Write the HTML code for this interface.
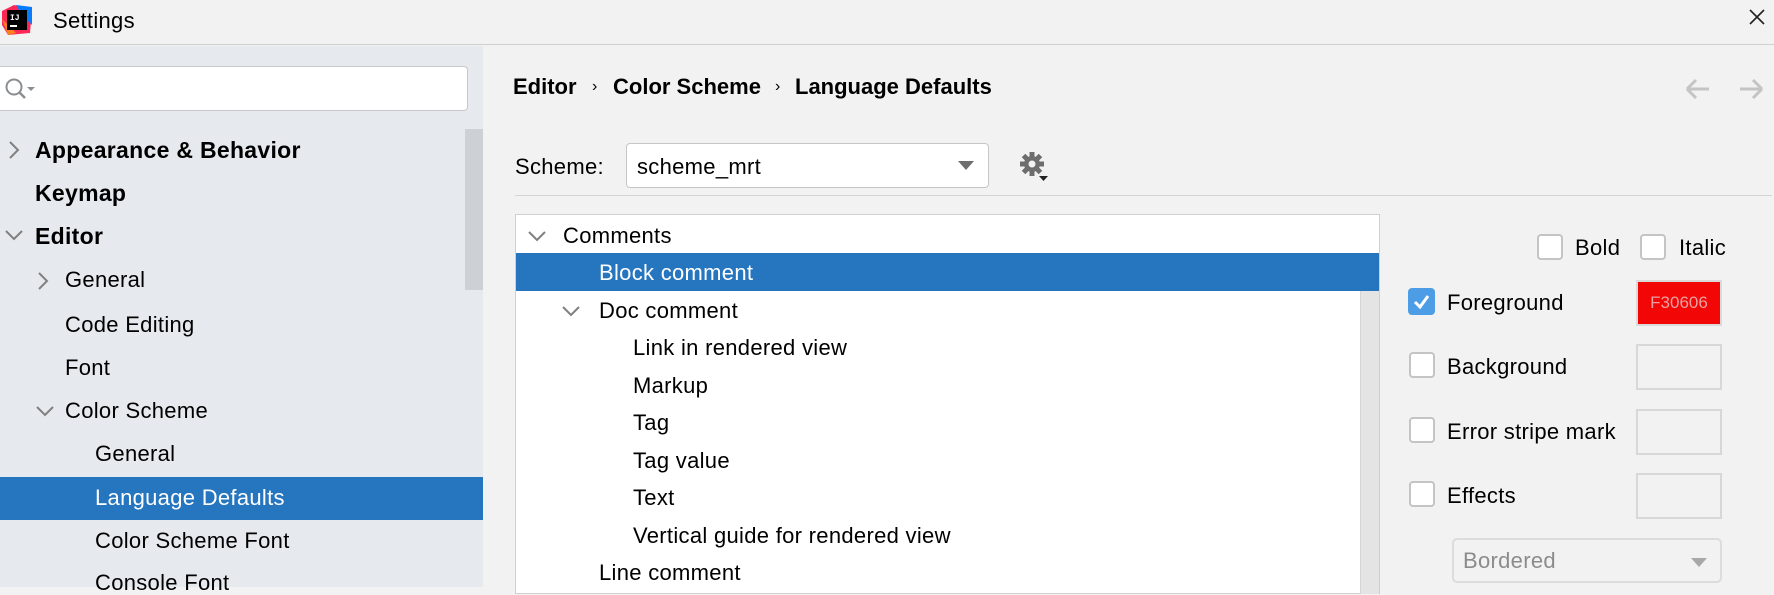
<!DOCTYPE html>
<html><head><style>
*{margin:0;padding:0;box-sizing:border-box}
body{width:1774px;height:587px;overflow:hidden;background:#f2f2f2;font-family:"Liberation Sans","Noto Sans CJK SC",sans-serif;color:#000;position:relative}
.a{position:absolute;white-space:nowrap}
.t{font-size:22px;line-height:24px;letter-spacing:0.3px}
.b{font-weight:bold}
.cb{position:absolute;width:26px;height:26px;border:2px solid #c4c4c4;border-radius:4px;background:#fff}
.box{position:absolute;left:1636px;width:86px;height:46px;border:2px solid #d8d8d8;background:#f2f2f2}
</style></head><body>
<div class="a" style="left:0;top:0;width:1774px;height:45px;background:#f2f2f2;border-bottom:1px solid #d0d0d0"></div>
<svg class="a" style="left:2px;top:5px" width="30" height="30" viewBox="0 0 30 30">
<polygon points="0,6 12,0 30,4 28,28 6,30 0,20" fill="#fe2857"/>
<polygon points="14,0 30,2 30,20 20,10" fill="#087cfa"/>
<polygon points="0,14 6,30 14,28" fill="#fc801d"/>
<rect x="5" y="5" width="20" height="20" fill="#000"/>
<text x="8" y="15" fill="#fff" font-size="8" font-family="Liberation Mono" font-weight="bold">IJ</text>
<rect x="8" y="20" width="7" height="2" fill="#fff"/>
</svg>
<div class="a" style="left:53px;top:8px;font-size:22px;line-height:26px;letter-spacing:0.3px">Settings</div>
<svg class="a" style="left:1749px;top:9px" width="16" height="16"><path d="M1 1L15 15M15 1L1 15" stroke="#222" stroke-width="1.6"/></svg>

<div class="a" style="left:0;top:46px;width:483px;height:541px;background:#e6eaee"></div>
<div class="a" style="left:0;top:66px;width:468px;height:45px;background:#fff;border:1px solid #c8c8c8;border-left:none;border-radius:0 4px 4px 0"></div>
<svg class="a" style="left:4px;top:76px" width="32" height="26"><circle cx="10" cy="11" r="7.5" fill="none" stroke="#8a8e92" stroke-width="2"/><path d="M15 16L21 22" stroke="#8a8e92" stroke-width="2.5"/><path d="M23 11h8l-4 4z" fill="#8a8e92"/></svg>
<div class="a" style="left:465px;top:129px;width:18px;height:161px;background:#cdd0d4"></div>
<svg class="a" style="left:7px;top:140px" width="14" height="20"><path d="M3 2L11 10L3 18" fill="none" stroke="#808080" stroke-width="2"/></svg>
<div class="a t b" style="left:35px;top:138px;font-size:23px">Appearance &amp; Behavior</div>
<div class="a t b" style="left:35px;top:181px;font-size:23px">Keymap</div>
<svg class="a" style="left:4px;top:228px" width="20" height="14"><path d="M2 3L10 11L18 3" fill="none" stroke="#808080" stroke-width="2"/></svg>
<div class="a t b" style="left:35px;top:224px;font-size:23px">Editor</div>
<svg class="a" style="left:36px;top:271px" width="14" height="20"><path d="M3 2L11 10L3 18" fill="none" stroke="#808080" stroke-width="2"/></svg>
<div class="a t" style="left:65px;top:268px">General</div>
<div class="a t" style="left:65px;top:313px">Code Editing</div>
<div class="a t" style="left:65px;top:356px">Font</div>
<svg class="a" style="left:35px;top:404px" width="20" height="14"><path d="M2 3L10 11L18 3" fill="none" stroke="#808080" stroke-width="2"/></svg>
<div class="a t" style="left:65px;top:399px">Color Scheme</div>
<div class="a t" style="left:95px;top:442px">General</div>
<div class="a" style="left:0;top:477px;width:483px;height:43px;background:#2675bf"></div>
<div class="a t" style="left:95px;top:486px;color:#fff">Language Defaults</div>
<div class="a t" style="left:95px;top:529px">Color Scheme Font</div>
<div class="a t" style="left:95px;top:571px">Console Font</div>

<div class="a b" style="left:513px;top:74px;font-size:22px;line-height:26px">Editor</div>
<div class="a" style="left:592px;top:74px;font-size:16px;line-height:26px">›</div>
<div class="a b" style="left:613px;top:74px;font-size:22px;line-height:26px">Color Scheme</div>
<div class="a" style="left:775px;top:74px;font-size:16px;line-height:26px">›</div>
<div class="a b" style="left:795px;top:74px;font-size:22px;line-height:26px">Language Defaults</div>
<svg class="a" style="left:1685px;top:78px" width="80" height="22"><path d="M2 11H24M2 11L11 2M2 11L11 20" fill="none" stroke="#c4c4c4" stroke-width="3"/><path d="M55 11H77M77 11L68 2M77 11L68 20" fill="none" stroke="#c4c4c4" stroke-width="3"/></svg>

<div class="a t" style="left:515px;top:155px">Scheme:</div>
<div class="a" style="left:626px;top:143px;width:363px;height:45px;background:#fff;border:1px solid #c6c6c6;border-radius:4px"></div>
<div class="a t" style="left:637px;top:155px">scheme_mrt</div>
<svg class="a" style="left:958px;top:161px" width="16" height="10"><path d="M0 0H16L8 9z" fill="#6e6e6e"/></svg>
<svg class="a" style="left:1019px;top:151px" width="32" height="32" viewBox="0 0 32 32">
<g fill="#6e6e6e" transform="translate(13,13)">
<circle r="8"/>
<rect x="-2.5" y="-12" width="5" height="24"/>
<rect x="-2.5" y="-12" width="5" height="24" transform="rotate(45)"/>
<rect x="-2.5" y="-12" width="5" height="24" transform="rotate(90)"/>
<rect x="-2.5" y="-12" width="5" height="24" transform="rotate(135)"/>
</g>
<circle cx="13" cy="13" r="3.5" fill="#f2f2f2"/>
<path d="M20 25H29L24.5 30z" fill="#222"/>
</svg>
<div class="a" style="left:515px;top:195px;width:1257px;height:1px;background:#d4d4d4"></div>

<div class="a" style="left:515px;top:214px;width:865px;height:380px;background:#fff;border:1px solid #d0d0d0"></div>
<div class="a" style="left:1360px;top:284px;width:19px;height:310px;background:#e4e4e4;border-left:1px solid #d6d6d6"></div>
<svg class="a" style="left:527px;top:229px" width="20" height="14"><path d="M2 3L10 11L18 3" fill="none" stroke="#808080" stroke-width="2"/></svg>
<div class="a t" style="left:563px;top:224px">Comments</div>
<div class="a" style="left:516px;top:253px;width:863px;height:38px;background:#2675bf"></div>
<div class="a t" style="left:599px;top:261px;color:#fff">Block comment</div>
<svg class="a" style="left:561px;top:304px" width="20" height="14"><path d="M2 3L10 11L18 3" fill="none" stroke="#808080" stroke-width="2"/></svg>
<div class="a t" style="left:599px;top:299px">Doc comment</div>
<div class="a t" style="left:633px;top:336px">Link in rendered view</div>
<div class="a t" style="left:633px;top:374px">Markup</div>
<div class="a t" style="left:633px;top:411px">Tag</div>
<div class="a t" style="left:633px;top:449px">Tag value</div>
<div class="a t" style="left:633px;top:486px">Text</div>
<div class="a t" style="left:633px;top:524px">Vertical guide for rendered view</div>
<div class="a t" style="left:599px;top:561px">Line comment</div>

<div class="cb" style="left:1537px;top:234px"></div>
<div class="a t" style="left:1575px;top:236px">Bold</div>
<div class="cb" style="left:1640px;top:234px"></div>
<div class="a t" style="left:1679px;top:236px">Italic</div>

<div class="a" style="left:1408px;top:288px;width:27px;height:27px;background:#4d9de6;border-radius:4px"></div>
<svg class="a" style="left:1408px;top:288px" width="27" height="27"><path d="M7 14L12 19L20 8" fill="none" stroke="#fff" stroke-width="3"/></svg>
<div class="a t" style="left:1447px;top:291px">Foreground</div>
<div class="cb" style="left:1409px;top:352px"></div>
<div class="a t" style="left:1447px;top:355px">Background</div>
<div class="cb" style="left:1409px;top:417px"></div>
<div class="a t" style="left:1447px;top:420px">Error stripe mark</div>
<div class="cb" style="left:1409px;top:481px"></div>
<div class="a t" style="left:1447px;top:484px">Effects</div>

<div class="box" style="top:280px;background:#f20606;border-color:#dadada"></div>
<div class="a" style="left:1636px;top:290px;width:86px;text-align:center;font-family:'Liberation Sans',sans-serif;font-size:17px;line-height:26px;color:#e8a0a0">F30606</div>
<div class="box" style="top:344px"></div>
<div class="box" style="top:409px"></div>
<div class="box" style="top:473px"></div>

<div class="a" style="left:1452px;top:538px;width:270px;height:45px;border:2px solid #dcdcdc;border-radius:5px;background:#f2f2f2"></div>
<div class="a t" style="left:1463px;top:549px;color:#8c8c8c">Bordered</div>
<svg class="a" style="left:1691px;top:558px" width="16" height="10"><path d="M0 0H16L8 9z" fill="#a8a8a8"/></svg>
</body></html>
